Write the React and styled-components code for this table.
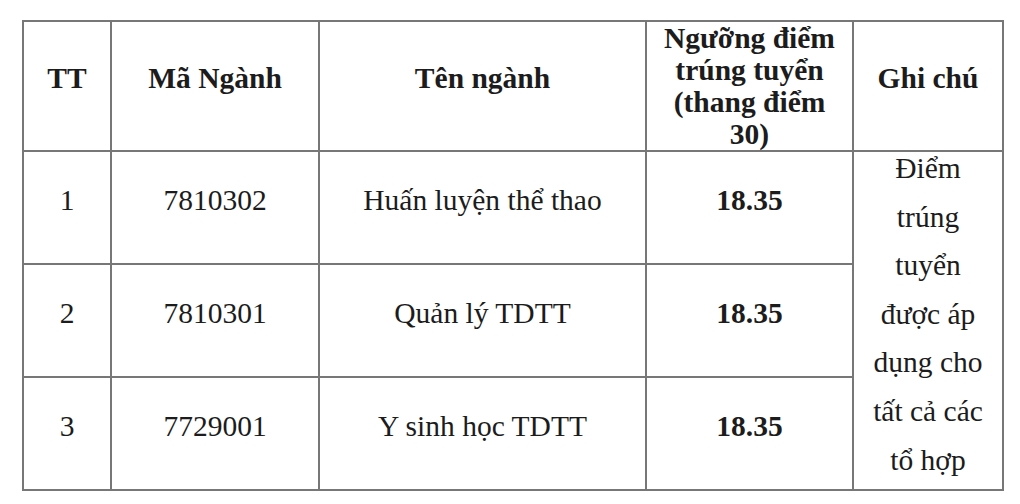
import React from "react";
import styled, { createGlobalStyle } from "styled-components";

const GlobalStyle = createGlobalStyle`
  html, body {
    margin: 0;
    padding: 0;
    background: #fff;
  }
  body {
    font-family: "Liberation Serif", "Times New Roman", serif;
    color: #1c1c1c;
  }
`;

const Page = styled.div`
  padding: 20px 0 0 22px;
`;

const Table = styled.table`
  border-collapse: collapse;
  table-layout: fixed;
  width: 980px;
  font-size: 29.5px;
`;

const Col = styled.col`
  width: ${(p) => p.$w}px;
`;

const Row = styled.tr`
  height: ${(p) => p.$h}px;
`;

const HeadCell = styled.th`
  border: 2px solid #777;
  padding: 0 4px ${(p) => (p.$tight ? 0 : 16)}px;
  font-weight: 700;
  text-align: center;
  vertical-align: middle;
  line-height: ${(p) => (p.$tight ? 32 : 34)}px;
`;

const Cell = styled.td`
  border: 2px solid #777;
  padding: 0 4px 16px;
  text-align: center;
  vertical-align: middle;
  font-weight: ${(p) => (p.$bold ? 700 : 400)};
  line-height: 34px;
`;

const NoteCell = styled.td`
  border: 2px solid #777;
  padding: 0 14px;
  text-align: center;
  vertical-align: top;
  line-height: 48.6px;
`;

const NoteText = styled.div`
  margin-top: -8px;
  margin-bottom: -8px;
`;

const rows = [
  { tt: "1", code: "7810302", name: "Huấn luyện thể thao", score: "18.35" },
  { tt: "2", code: "7810301", name: "Quản lý TDTT", score: "18.35" },
  { tt: "3", code: "7729001", name: "Y sinh học TDTT", score: "18.35" },
];

export default function App() {
  return (
    <Page>
      <GlobalStyle />
      <Table>
        <colgroup>
          <Col $w={88} />
          <Col $w={208} />
          <Col $w={327} />
          <Col $w={207} />
          <Col $w={150} />
        </colgroup>
        <thead>
          <Row $h={130}>
            <HeadCell>TT</HeadCell>
            <HeadCell>Mã Ngành</HeadCell>
            <HeadCell>Tên ngành</HeadCell>
            <HeadCell $tight>
              Ngưỡng điểm trúng tuyển (thang điểm 30)
            </HeadCell>
            <HeadCell>Ghi chú</HeadCell>
          </Row>
        </thead>
        <tbody>
          {rows.map((r, i) => (
            <Row $h={113} key={r.tt}>
              <Cell>{r.tt}</Cell>
              <Cell>{r.code}</Cell>
              <Cell>{r.name}</Cell>
              <Cell $bold>{r.score}</Cell>
              {i === 0 && (
                <NoteCell rowSpan={3}>
                  <NoteText>
                    Điểm trúng tuyển được áp dụng cho tất cả các tổ hợp
                  </NoteText>
                </NoteCell>
              )}
            </Row>
          ))}
        </tbody>
      </Table>
    </Page>
  );
}
